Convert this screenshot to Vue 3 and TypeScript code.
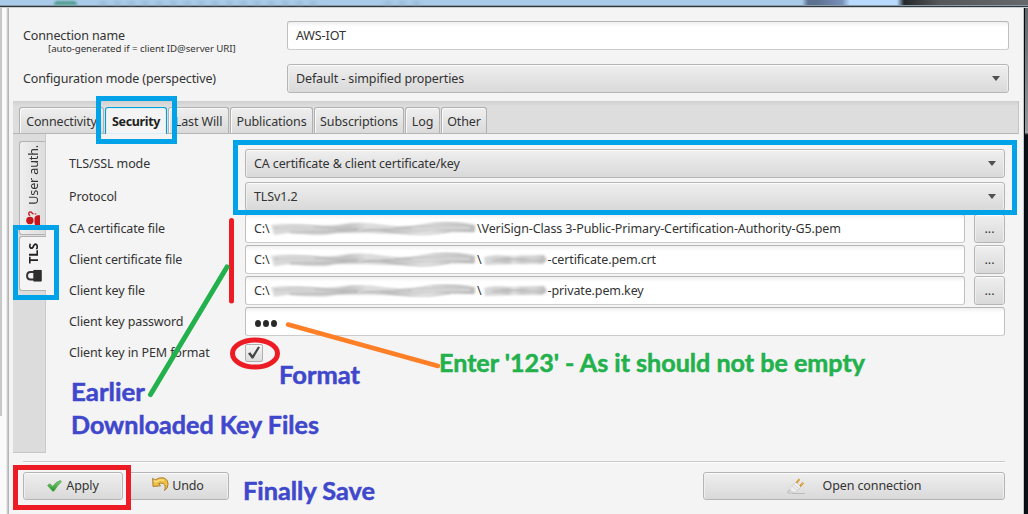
<script setup lang="ts">
interface Tab { label: string; width: number; active?: boolean }
interface FileRow { label: string; tail: string; second: boolean }

const tabs: Tab[] = [
  { label: 'Connectivity', width: 85 },
  { label: 'Security', width: 62, active: true },
  { label: 'Last Will', width: 61 },
  { label: 'Publications', width: 83 },
  { label: 'Subscriptions', width: 90 },
  { label: 'Log', width: 35 },
  { label: 'Other', width: 46 },
]

const files: FileRow[] = [
  { label: 'CA certificate file', tail: 'VeriSign-Class 3-Public-Primary-Certification-Authority-G5.pem', second: false },
  { label: 'Client certificate file', tail: '-certificate.pem.crt', second: true },
  { label: 'Client key file', tail: '-private.pem.key', second: true },
]
</script>

<template>
  <div class="screen">
    <div class="glass"><i class="blob"></i><i class="ghost g1"></i><i class="ghost g2"></i></div>
    <div class="frame">
      <div class="edge-left"></div>
      <main class="window">
        <section class="top-form">
          <div class="top-row">
            <div class="top-label">
              <span class="t name">Connection name</span>
              <small>[auto-generated if = client ID@server URI]</small>
            </div>
            <div class="field top-control"><span class="t aws">AWS-IOT</span></div>
          </div>
          <div class="top-row">
            <div class="top-label"><span class="t">Configuration mode (perspective)</span></div>
            <div class="combo top-control"><span class="t">Default - simpified properties</span><i class="arrow"></i></div>
          </div>
        </section>

        <nav class="tabs">
          <div v-for="tab in tabs" :key="tab.label" class="tab" :class="{ active: tab.active }" :style="{ width: tab.width + 'px' }">
            <span class="t">{{ tab.label }}</span>
          </div>
        </nav>

        <section class="pane">
          <aside class="side">
            <div class="side-tab auth">
              <div class="side-content">
                <svg width="15" height="16" viewBox="0 0 15 16">
                  <circle cx="3.900" cy="9.800" r="3.700" fill="#c4161c" />
                  <path d="M14 4.500H11.500Q8.500 5 8.500 8V12Q8.500 15 11.500 15.500H14Z" fill="#c4161c" />
                  <path d="M4.200 4.800C2.200 4.600 2.200 1.200 4.400 1.200 6.200 1.200 5.700 3.200 7.600 3.200M8.800 3.200H10.200" fill="none" stroke="#c4161c" stroke-width="1.400" />
                </svg>
                <span class="t">User auth.</span>
              </div>
            </div>
            <div class="side-tab tls">
              <div class="side-content">
                <svg width="16" height="12" viewBox="0 0 16 12">
                  <path d="M8 2.200H4.500Q1.100 2.200 1.100 6T4.500 9.800H8" fill="none" stroke="#333" stroke-width="2" />
                  <rect x="7.300" y="0" width="8.500" height="12" rx="1" fill="#2e2e2e" />
                </svg>
                <span class="t">TLS</span>
              </div>
            </div>
          </aside>

          <div class="form">
            <div class="row combo-row">
              <label class="t">TLS/SSL mode</label>
              <div class="combo"><span class="t">CA certificate &amp; client certificate/key</span><i class="arrow"></i></div>
            </div>
            <div class="row combo-row">
              <label class="t">Protocol</label>
              <div class="combo"><span class="t">TLSv1.2</span><i class="arrow"></i></div>
            </div>
            <div v-for="(file, n) in files" :key="file.label" class="row">
              <label class="t">{{ file.label }}</label>
              <div class="field">
                <span class="t drive">C:\</span>
                <svg class="smudge" :class="'s' + n" width="207" height="16" viewBox="0 0 207 16">
                  <path d="M1 4Q18 2 38 4T75 3T112 4T154 3T205 4V11Q175 11 150 12T96 12T60 13T18 12L4 14Z" fill="url(#smear)" filter="url(#soft)" />
                  <path d="M5 7Q33 3 62 7T118 8T171 7T203 10M20 11Q55 12 75 9T125 11T180 10" fill="none" stroke="#b3b3b3" stroke-width="1.200" filter="url(#soft)" />
                  <path d="M8 6Q28 4 44 6M88 9Q105 4 125 6M142 7H200" fill="none" stroke="#e2e2e2" stroke-width="1.500" filter="url(#soft)" />
                </svg>
                <span class="t">\</span>
                <svg v-if="file.second" class="smudge-short" width="66" height="16" viewBox="0 0 66 16">
                  <path d="M2 5Q10 2 25 4L62 3 65 8 61 12Q48 12 34 12T3 13Z" fill="url(#smear)" filter="url(#soft)" />
                  <path d="M10 9Q28 6 44 8T62 8" fill="none" stroke="#b0b0b0" stroke-width="1.200" filter="url(#soft)" />
                </svg>
                <span class="t">{{ file.tail }}</span>
              </div>
              <button class="button browse">...</button>
            </div>
            <div class="row">
              <label class="t">Client key password</label>
              <div class="field dots"><i></i><i></i><i></i></div>
            </div>
            <div class="row">
              <label class="t">Client key in PEM format</label>
              <div class="check">
                <svg width="12" height="13" viewBox="0 0 12 13"><path d="M0 7.500 2.200 6.200 4.600 9.300 10 0.500 12 1.300 5.300 12.500H3.800Z" fill="#444" /></svg>
              </div>
            </div>
          </div>
        </section>

        <footer class="actions">
          <button class="button apply">
            <svg width="15" height="12" viewBox="0 0 15 12">
              <defs><linearGradient id="leaf" x2="0" y2="1"><stop stop-color="#8ac97d" /><stop offset="1" stop-color="#209521" /></linearGradient></defs>
              <path d="M.6 5.500Q2 3.300 3.500 4.200L5.800 6.500Q8.800 1.700 13.300.6 15 1 13.700 2.600 10.300 5.600 7.300 10.600 6.300 12 5 10.400Z" fill="url(#leaf)" stroke="#47a246" stroke-width=".7" />
            </svg>
            <span class="t">Apply</span>
          </button>
          <button class="button undo">
            <svg width="17" height="15" viewBox="0 0 17 15">
              <path d="M.7 1.200 3 3.100Q7 .2 11 .8 16 1.800 16 7.500 15.800 11.800 12.500 13.500 14.300 8.600 11.500 6.800 9.300 5.500 6.600 6.500L8.500 8.800 1 9.500Z" fill="#efbf43" stroke="#aa8133" />
              <path d="M2 3.400 4 5Q8 1.700 12 3.500" fill="none" stroke="#ffe493" stroke-width="1.300" />
            </svg>
            <span class="t">Undo</span>
          </button>
          <button class="button open">
            <svg width="19" height="17" viewBox="0 0 19 17">
              <path d="M5 15.500H18" stroke="#bbb" />
              <path d="M4.500 12Q.5 13 .7 14.300T6 15" fill="none" stroke="#c4c4c4" stroke-width="1.300" />
              <path d="M3 9.500 9 4 14 9 8.500 14Q5 15 3.500 12.500Z" fill="#efefef" stroke="#cdcdcd" stroke-width=".8" />
              <path d="M5 8 10.500 12.800M7 6.200 12.200 11" stroke="#d2d2d2" />
              <path d="M9.500 4.800 12.500 1.200M13 8.200 16.300 4.700" stroke="#cf9630" stroke-width="2" />
              <path d="M10.500 3.300 12.300 1.200M14 7.200 16 5" stroke="#f0c565" stroke-width=".8" />
            </svg>
            <span class="t">Open connection</span>
          </button>
        </footer>
      </main>
      <div class="edge-right"></div>
    </div>

    <svg class="notes" width="1028" height="514" viewBox="0 0 1028 514">
      <defs>
        <linearGradient id="smear" x2="1" y2="0">
          <stop stop-color="#dadada" /><stop offset=".25" stop-color="#cfcfcf" /><stop offset=".38" stop-color="#c4c4c4" />
          <stop offset=".47" stop-color="#dedede" /><stop offset=".6" stop-color="#cacaca" /><stop offset=".78" stop-color="#d5d5d5" /><stop offset="1" stop-color="#bdbdbd" />
        </linearGradient>
        <filter id="soft" x="-5%" y="-30%" width="110%" height="160%"><feGaussianBlur stdDeviation="1" /></filter>
      </defs>
      <g fill="none" stroke="#00a2e8" stroke-width="5">
        <rect x="98.500" y="98.500" width="76" height="43" />
        <rect x="235.500" y="142.500" width="779" height="70" />
        <rect x="15.500" y="227.500" width="41" height="70" />
      </g>
      <g fill="none" stroke="#ed1c24" stroke-width="5" stroke-linecap="round">
        <rect x="15.500" y="467.500" width="113" height="40" />
        <ellipse cx="255" cy="353.500" rx="22.500" ry="13.500" />
        <path d="M231.500 220.500V301" />
      </g>
      <path d="M227 267 150.500 394.500" stroke="#22b14c" stroke-width="5" stroke-linecap="round" />
      <path d="M288 324.500 438 366" stroke="#ff7f27" stroke-width="4.500" stroke-linecap="round" />
      <g class="note">
        <text x="71" y="401" textLength="74" lengthAdjust="spacingAndGlyphs">Earlier</text>
        <text x="71" y="434" textLength="248" lengthAdjust="spacingAndGlyphs">Downloaded Key Files</text>
        <text x="279" y="384" textLength="81" lengthAdjust="spacingAndGlyphs">Format</text>
        <text x="243" y="500" textLength="132" lengthAdjust="spacingAndGlyphs">Finally Save</text>
        <text class="green" x="439" y="372" textLength="426" lengthAdjust="spacingAndGlyphs">Enter '123' - As it should not be empty</text>
      </g>
    </svg>
  </div>
</template>

<style>
body { margin: 0; overflow: hidden; }
</style>

<style scoped>
* { box-sizing: border-box; }
.screen { position: relative; width: 1028px; height: 514px; overflow: hidden; background: #f4f4f4; font: 12.5px/16px "Noto Sans", "Open Sans", sans-serif; color: #333; }
.t { display: inline-block; white-space: pre; letter-spacing: -.12px; }
.glass { position: relative; height: 8px; overflow: hidden; border-bottom: 1px solid #c9cdd0; box-shadow: inset 0 -1px #30373d, inset 0 -2px #889ba8; background: linear-gradient(90deg, #a9cbea 0 802px, #5d7190 808px 816px, #7187ae 835px, #7990b7 842px, #b8daff 850px 897px, #25292c 904px, #54585b 940px, #65696c 1028px); }
.blob { position: absolute; left: 54px; top: 1px; width: 23px; height: 4px; border-radius: 8px 8px 0 0; background: #539d91; filter: blur(1px); }
.ghost { position: absolute; top: 2px; height: 3px; background: repeating-linear-gradient(90deg, #849fb9 0 5px, transparent 8px 14px); filter: blur(2px); opacity: .7; }
.g1 { left: 100px; width: 220px; }
.g2 { left: 385px; width: 37px; }
.frame { display: flex; height: 506px; }
.edge-left { width: 9px; background: linear-gradient(#c8c8c8, #c8c8c8) 0 0 / 2px 408px no-repeat, linear-gradient(90deg, #fafafa 0 6px, #ddd 7px, #b5b5b5 8px 9px); }
.window { width: 1014px; background: #f4f4f4; }
.edge-right { width: 5px; background: linear-gradient(90deg, #bfc8ca 0 1px, #05090c 1px 2px, transparent 2px), linear-gradient(#62676b, #92989c 123px, #b5babc 124px, #090e14 127px); }
.top-form { padding: 13px 14px 0; display: flex; flex-direction: column; gap: 14px; height: 93px; }
.top-row { display: flex; height: 29px; }
.top-label { width: 264px; padding-top: 7px; }
.top-label .name { display: block; line-height: 16px; }
.top-label small { display: block; margin-left: 25px; font-size: 9.700px; line-height: 9px; letter-spacing: -.05px; white-space: nowrap; }
.top-control { width: 722px; }
.field, .combo { height: 29px; display: flex; align-items: center; padding: 0 8px; border: 1px solid #b5b5b5; border-radius: 3px; }
.field { background: linear-gradient(#f0f0f0, #fff 5px); border-bottom-color: #ccc; border-left-color: #c0c0c0; border-right-color: #c0c0c0; }
.combo, .button { background: linear-gradient(#efefef, #d9d9d9); box-shadow: inset 0 1px #fcfcfc, inset 1px 0 #eee, inset -1px 0 #eee; }
.arrow { margin-left: auto; border: 4.500px solid transparent; border-top: 5px solid #505050; border-bottom: 0; }
.tabs { height: 33px; margin: 0 4px 0 4px; padding: 6px 0 0 6px; display: flex; gap: 1px; background: linear-gradient(#cfcfcf, #ddd 5px); border-bottom: 1px solid #b5b5b5; border-right: 1px solid #c5c5c5; }
.tab { height: 26px; display: flex; align-items: center; justify-content: center; padding-top: 3px; border: 1px solid #b0b0b0; border-bottom: 0; border-radius: 3px 3px 0 0; background: linear-gradient(#efefef, #dadada); box-shadow: inset 1px 1px #fafafa; }
.tab.active { height: 27px; padding-top: 1px; background: #f4f4f4; border-color: #039ed3; font-weight: 700; color: #222; box-shadow: inset 0 0 0 1px #d8f0f8; }
.tab.active .t { letter-spacing: -.35px; }
.pane { display: flex; height: 319px; padding-left: 4px; }
.side { width: 33px; height: 319px; padding: 7px 0 0 6px; background: #dcdcdc; box-shadow: inset -1px 0 #cacaca, inset 0 -1px #c6c6c6; }
.side-tab { display: flex; align-items: flex-end; justify-content: center; width: 26px; padding-left: 2px; border: 1px solid #b2b2b2; border-right: 0; border-radius: 3px 0 0 3px; background: linear-gradient(90deg, #efefef, #ddd); }
.auth { height: 94px; margin-bottom: 1px; padding-bottom: 7px; }
.tls { height: 55px; width: 27px; background: #f4f4f4; padding-bottom: 8px; font-weight: 700; color: #222; }
.side-content { display: flex; align-items: center; gap: 6px; writing-mode: vertical-rl; transform: rotate(180deg); }
.side-content svg { transform: rotate(180deg); }
.form { padding: 15px 0 0 23px; display: flex; flex-direction: column; gap: 2px; }
.row { display: flex; align-items: center; height: 29px; }
.combo-row { margin-bottom: 2px; }
.combo-row + .combo-row { margin-bottom: 1px; }
.row label { width: 176px; }
.row .combo, .row .field { width: 760px; }
.row:has(.browse) .field { width: 720px; margin-right: 9px; }
.drive { width: 16px; }
.smudge, .smudge-short { flex: none; }
.s1 { transform: scaleY(1.05); }
.s2 { transform: scaleY(.95); }
.button { height: 29px; padding: 0; border: 1px solid #b5b5b5; border-radius: 3px; font: inherit; color: #333; display: flex; align-items: center; justify-content: center; }
.browse { width: 31px; padding-top: 1px; }
.field.dots { gap: 2px; padding-left: 9px; }
.dots i { width: 6px; height: 7px; border-radius: 50%; background: #292929; margin-top: 3px; }
.check { width: 18px; height: 18px; display: grid; place-items: center; border: 1px solid #b0b0b0; border-radius: 2px; background: linear-gradient(#f5f5f5, #ddd); }
.actions { display: flex; margin: 8px 18px 0 14px; padding-top: 10px; border-top: 1px solid #c8c8c8; box-shadow: inset 0 1px #fff; }
.actions .button { height: 28px; }
.apply { width: 100px; gap: 4px; }
.undo { width: 102px; margin-left: 4px; gap: 3px; }
.undo svg { margin-top: -3px; }
.open { width: 302px; margin-left: auto; gap: 17px; }
.notes { position: absolute; left: 0; top: 0; pointer-events: none; }
.note { font: 700 24px Lato, sans-serif; fill: #3f48cc; stroke: #3f48cc; stroke-width: .5px; }
.note .green { fill: #22b14c; stroke: #22b14c; }
</style>
